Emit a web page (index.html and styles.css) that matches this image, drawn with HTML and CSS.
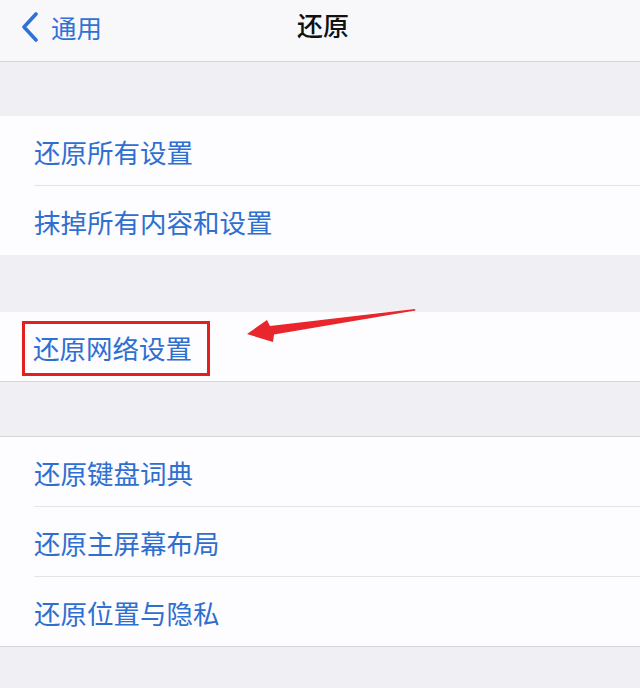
FILE: index.html
```html
<!DOCTYPE html>
<html lang="zh-CN">
<head>
    <meta charset="UTF-8">
    <meta name="viewport" content="width=device-width, initial-scale=1.0">
    <title>还原</title>
    <link rel="stylesheet" href="styles.css">
</head>
<body>

    <!-- 导航栏 -->
    <div class="navbar">
        <a class="back" href="#">
            <svg class="chevron" width="18" height="30" viewBox="0 0 18 30">
                <path d="M15 2 L3 15 L15 28" fill="none" stroke="#2f72d6" stroke-width="3.6" stroke-linecap="round" stroke-linejoin="round"/>
            </svg>
            <span>通用</span>
        </a>
        <div class="title">还原</div>
    </div>

    <div class="group first">
        <div class="row"><span class="label">还原所有设置</span></div>
        <div class="row"><span class="label">抹掉所有内容和设置</span></div>
    </div>

    <div class="group network">
        <div class="row marked"><span class="label boxed">还原网络设置</span></div>
        <!-- 标注箭头 -->
        <svg class="arrow" width="180" height="40" viewBox="0 0 180 40">
            <path d="M7 27 L27 13 L30 19 L175 2 L175.5 3.5 L34 27.5 L33 35 Z" fill="#e8262b"/>
        </svg>
    </div>

    <div class="group last">
        <div class="row"><span class="label">还原键盘词典</span></div>
        <div class="row"><span class="label">还原主屏幕布局</span></div>
        <div class="row"><span class="label">还原位置与隐私</span></div>
    </div>

</body>
</html>
```

FILE: styles.css
```css
body {
    margin: 0;
    background-color: #efeff4;
    font-family: "Noto Sans CJK SC", "Noto Sans", sans-serif;
    height: 688px;
    overflow: hidden;
}

.navbar {
    height: 61px;
    background-color: #f8f8fa;
    border-bottom: 1px solid #d6d6da;
    display: flex;
    align-items: center;
    position: relative;
}

.back {
    display: flex;
    align-items: center;
    margin-left: 21px;
    margin-top: -8px;
    color: #2f72d6;
    text-decoration: none;
    font-size: 25.5px;
}

.back span {
    margin-left: 12px;
}

.title {
    position: absolute;
    left: 6px;
    right: 0;
    top: 6px;
    text-align: center;
    font-size: 26px;
    font-weight: 500;
    color: #111;
    pointer-events: none;
}

.group {
    background-color: #fdfcff;
    position: relative;
}

.group.first {
    margin-top: 54px;
}

.group.network {
    margin-top: 57px;
    border-bottom: 1px solid #d6d6da;
}

.group.last {
    margin-top: 54px;
    border-top: 1px solid #d6d6da;
    border-bottom: 1px solid #d6d6da;
}

.row {
    height: 69px;
    margin-left: 34px;
    display: flex;
    align-items: center;
    border-bottom: 1px solid #e4e4e8;
}

.row:last-child,
.row.marked {
    border-bottom: none;
}

.label {
    font-size: 26.5px;
    color: #2f6fd0;
    padding-top: 2px;
}

.row.marked {
    margin-left: 22px;
    align-items: flex-start;
}

.boxed {
    margin-top: 9px;
    width: 174px;
    height: 49px;
    padding-left: 8px;
    padding-top: 0;
    border: 3px solid #e3201f;
    line-height: 48px;
}

.arrow {
    position: absolute;
    left: 240px;
    top: -5px;
}
```
